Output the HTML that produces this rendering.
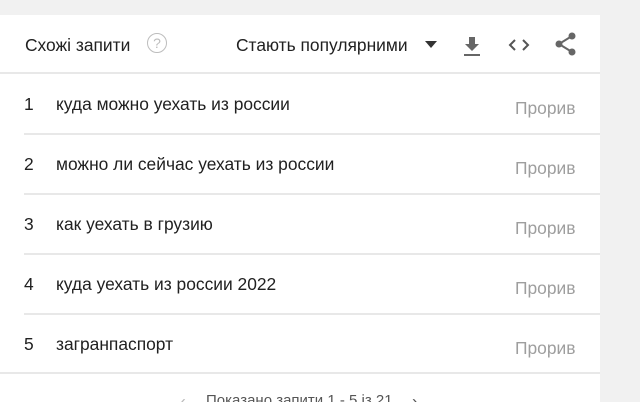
<!DOCTYPE html><html><head><style>
html,body{margin:0;width:640px;height:402px;overflow:hidden}
body{background:#f1f1f1;font-family:"Liberation Sans",sans-serif;position:relative}
.card{position:absolute;left:0;top:15px;width:600px;height:400px;background:#fff}
.t{position:absolute;font-size:17.4px;color:#212121;white-space:nowrap;line-height:20px}
.hr{position:absolute;height:2px;background:#e8e8e8}
</style></head><body>
<div class="card">
<div class="t" style="left:25px;top:20px">Схожі запити</div>
<div style="position:absolute;left:147px;top:18px;width:18px;height:18px;border:1.5px solid #bdbdbd;border-radius:50%;color:#bdbdbd;font-size:14px;text-align:center;line-height:18px">?</div>
<div class="t" style="left:236px;top:20px">Стають популярними</div>
<div style="position:absolute;left:425px;top:26px;border-left:6px solid transparent;border-right:6px solid transparent;border-top:7px solid #333"></div>
<svg style="position:absolute;left:462px;top:20px" width="20" height="22" viewBox="0 0 20 22"><path d="M7 2h6v7h4l-7 7-7-7h4z" fill="#666"/><rect x="2" y="19" width="16" height="2" fill="#666"/></svg>
<svg style="position:absolute;left:508px;top:22px" width="22" height="16" viewBox="0 0 22 16"><path d="M7 3L2 8l5 5M15 3l5 5-5 5" stroke="#555" stroke-width="2" fill="none"/></svg>
<svg style="position:absolute;left:555px;top:17px" width="22" height="24" viewBox="0 0 22 24"><circle cx="17" cy="4" r="3.5" fill="#666"/><circle cx="4" cy="12" r="3.5" fill="#666"/><circle cx="17" cy="20" r="3.5" fill="#666"/><path d="M17 4L4 12l13 8" stroke="#666" stroke-width="2" fill="none"/></svg>
<div class="hr" style="left:0;width:600px;top:57px"></div>
<div class="t" style="left:24px;top:79px">1</div><div class="t" style="left:56px;top:79px">куда можно уехать из россии</div><div class="t" style="left:515px;top:83px;color:#9e9e9e">Прорив</div>
<div class="hr" style="left:24px;width:576px;top:118px"></div>
<div class="t" style="left:24px;top:139px">2</div><div class="t" style="left:56px;top:139px">можно ли сейчас уехать из россии</div><div class="t" style="left:515px;top:143px;color:#9e9e9e">Прорив</div>
<div class="hr" style="left:24px;width:576px;top:178px"></div>
<div class="t" style="left:24px;top:199px">3</div><div class="t" style="left:56px;top:199px">как уехать в грузию</div><div class="t" style="left:515px;top:203px;color:#9e9e9e">Прорив</div>
<div class="hr" style="left:24px;width:576px;top:238px"></div>
<div class="t" style="left:24px;top:259px">4</div><div class="t" style="left:56px;top:259px">куда уехать из россии 2022</div><div class="t" style="left:515px;top:263px;color:#9e9e9e">Прорив</div>
<div class="hr" style="left:24px;width:576px;top:298px"></div>
<div class="t" style="left:24px;top:319px">5</div><div class="t" style="left:56px;top:319px">загранпаспорт</div><div class="t" style="left:515px;top:323px;color:#9e9e9e">Прорив</div>
<div class="hr" style="left:0;width:600px;top:357px"></div>
<div class="t" style="left:180px;top:376px;color:#bbb">‹</div>
<div class="t" style="left:206px;top:376px;font-size:15px;color:#555">Показано запити 1 - 5 із 21</div>
<div class="t" style="left:412px;top:376px;color:#555">›</div>
</div>
</body></html>
